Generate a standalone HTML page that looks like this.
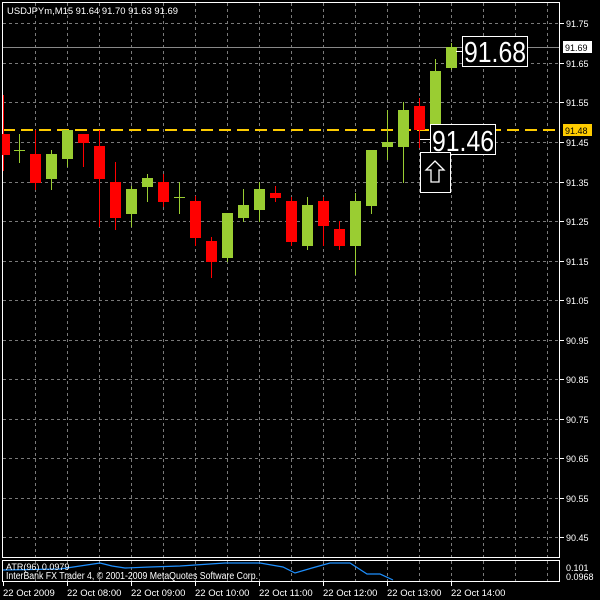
<!DOCTYPE html>
<html><head><meta charset="utf-8"><style>
html,body{margin:0;padding:0;background:#000;width:600px;height:600px;overflow:hidden}
svg{display:block}
text{font-family:"Liberation Sans",sans-serif;fill:#fff}
</style></head><body>
<svg width="600" height="600" viewBox="0 0 600 600" xmlns="http://www.w3.org/2000/svg">
<rect width="600" height="600" fill="#000"/>
<g stroke="#7a7a7a" stroke-width="1" stroke-dasharray="3,3">
<path d="M35.5 3V557M67.5 3V557M99.5 3V557M131.5 3V557M163.5 3V557M195.5 3V557M227.5 3V557M259.5 3V557M291.5 3V557M323.5 3V557M355.5 3V557M387.5 3V557M419.5 3V557M451.5 3V557M483.5 3V557M515.5 3V557M547.5 3V557"/>
<path d="M3 23.5H559M3 63.5H559M3 102.5H559M3 142.5H559M3 182.5H559M3 221.5H559M3 261.5H559M3 300.5H559M3 340.5H559M3 379.5H559M3 419.5H559M3 458.5H559M3 498.5H559M3 537.5H559"/>
<path d="M35.5 561V581M67.5 561V581M99.5 561V581M131.5 561V581M163.5 561V581M195.5 561V581M227.5 561V581M259.5 561V581M291.5 561V581M323.5 561V581M355.5 561V581M387.5 561V581M419.5 561V581M451.5 561V581M483.5 561V581M515.5 561V581M547.5 561V581"/>
</g>
<path d="M3 47.5H559" stroke="#888" stroke-width="1"/>
<path d="M3 130H559" stroke="#ffcc00" stroke-width="2" stroke-dasharray="12,6"/>
<rect x="2.5" y="2.5" width="557" height="555" fill="none" stroke="#fff"/>
<rect x="2.5" y="560.5" width="557" height="21" fill="none" stroke="#fff"/>
<g stroke-width="1">
<g stroke="#ff0000">
<path d="M3.5 95V171M35.5 130V190M83.5 134V167M99.5 130V227M115.5 162V230M163.5 174V207M195.5 196V246M211.5 237V278M275.5 186V202M291.5 197V246M323.5 197V246M339.5 221V250M419.5 98V148"/>
</g>
<g stroke="#9acd32">
<path d="M19.5 134V163M51.5 150V190M67.5 130V167M131.5 186V227M147.5 174V202M179.5 182V214M227.5 213V262M243.5 189V222M259.5 182V222M307.5 197V250M355.5 193V275M371.5 150V214M387.5 110V160M403.5 102V183M435.5 59V130M451.5 43V70"/>
<path d="M14 150.5H25M174 197.5H185"/>
</g>
</g>
<g fill="#ff0000">
<rect x="2" y="134" width="8" height="21"/>
<rect x="30" y="154" width="11" height="29"/>
<rect x="78" y="134" width="11" height="9"/>
<rect x="94" y="146" width="11" height="33"/>
<rect x="110" y="182" width="11" height="36"/>
<rect x="158" y="182" width="11" height="20"/>
<rect x="190" y="201" width="11" height="37"/>
<rect x="206" y="241" width="11" height="21"/>
<rect x="270" y="193" width="11" height="5"/>
<rect x="286" y="201" width="11" height="41"/>
<rect x="318" y="201" width="11" height="25"/>
<rect x="334" y="229" width="11" height="17"/>
<rect x="414" y="106" width="11" height="24"/>
</g>
<g fill="#9acd32">
<rect x="46" y="154" width="11" height="25"/>
<rect x="62" y="130" width="11" height="29"/>
<rect x="126" y="189" width="11" height="25"/>
<rect x="142" y="178" width="11" height="9"/>
<rect x="222" y="213" width="11" height="45"/>
<rect x="238" y="205" width="11" height="13"/>
<rect x="254" y="189" width="11" height="21"/>
<rect x="302" y="205" width="11" height="41"/>
<rect x="350" y="201" width="11" height="45"/>
<rect x="366" y="150" width="11" height="56"/>
<rect x="382" y="142" width="11" height="5"/>
<rect x="398" y="110" width="11" height="37"/>
<rect x="430" y="71" width="11" height="59"/>
<rect x="446" y="47" width="11" height="21"/>
</g>
<path d="M456 51.5H462M420 139.5H430" stroke="#fff"/>
<rect x="462.5" y="36.5" width="65" height="30" fill="#000" stroke="#fff"/>
<text x="464" y="62" font-size="29" textLength="62" lengthAdjust="spacingAndGlyphs">91.68</text>
<rect x="430.5" y="124.5" width="65" height="30" fill="#000" stroke="#fff"/>
<text x="432" y="151" font-size="29" textLength="62" lengthAdjust="spacingAndGlyphs">91.46</text>
<rect x="420.5" y="152.5" width="30" height="40" fill="#000" stroke="#fff"/>
<path d="M435 161L444 170H439V182H431V170H426Z" fill="none" stroke="#fff" stroke-width="1.3"/>
<text x="7" y="14" font-size="9.5" textLength="171" lengthAdjust="spacingAndGlyphs">USDJPYm,M15  91.64 91.70 91.63 91.69</text>
<g font-size="9">
<path d="M560 23.5h4M560 63.5h4M560 102.5h4M560 142.5h4M560 182.5h4M560 221.5h4M560 261.5h4M560 300.5h4M560 340.5h4M560 379.5h4M560 419.5h4M560 458.5h4M560 498.5h4M560 537.5h4" stroke="#fff"/>
<text x="566" y="27">91.75</text><text x="566" y="67">91.65</text><text x="566" y="106">91.55</text><text x="566" y="146">91.45</text><text x="566" y="186">91.35</text><text x="566" y="225">91.25</text><text x="566" y="265">91.15</text><text x="566" y="304">91.05</text><text x="566" y="344">90.95</text><text x="566" y="383">90.85</text><text x="566" y="423">90.75</text><text x="566" y="462">90.65</text><text x="566" y="502">90.55</text><text x="566" y="541">90.45</text>
<rect x="563" y="41" width="29" height="12" fill="#fff"/>
<text x="565" y="51" style="fill:#000">91.69</text>
<rect x="563" y="124" width="29" height="12" fill="#ffcc00"/>
<text x="565" y="134" style="fill:#000">91.48</text>
<text x="566" y="571">0.101</text>
<text x="566" y="580">0.0968</text>
</g>
<polyline fill="none" stroke="#1e90ff" stroke-width="1.2" points="3,570 60,569 80,566 100,563 112,566 125,568 150,567 180,566 225,563 260,563 283,567 295,573 312,568 330,563 350,563 367,574 380,574 393,580"/>
<text x="6" y="570" font-size="9">ATR(96) 0.0979</text>
<text x="6" y="579" font-size="10" textLength="252" lengthAdjust="spacingAndGlyphs">InterBank FX Trader 4, © 2001-2009 MetaQuotes Software Corp.</text>
<g font-size="9.5">
<path d="M3.5 582v4M67.5 582v4M131.5 582v4M195.5 582v4M259.5 582v4M323.5 582v4M387.5 582v4M451.5 582v4" stroke="#fff"/>
<text x="3" y="596">22 Oct 2009</text><text x="67" y="596">22 Oct 08:00</text><text x="131" y="596">22 Oct 09:00</text><text x="195" y="596">22 Oct 10:00</text><text x="259" y="596">22 Oct 11:00</text><text x="323" y="596">22 Oct 12:00</text><text x="387" y="596">22 Oct 13:00</text><text x="451" y="596">22 Oct 14:00</text>
</g>
</svg>
</body></html>
